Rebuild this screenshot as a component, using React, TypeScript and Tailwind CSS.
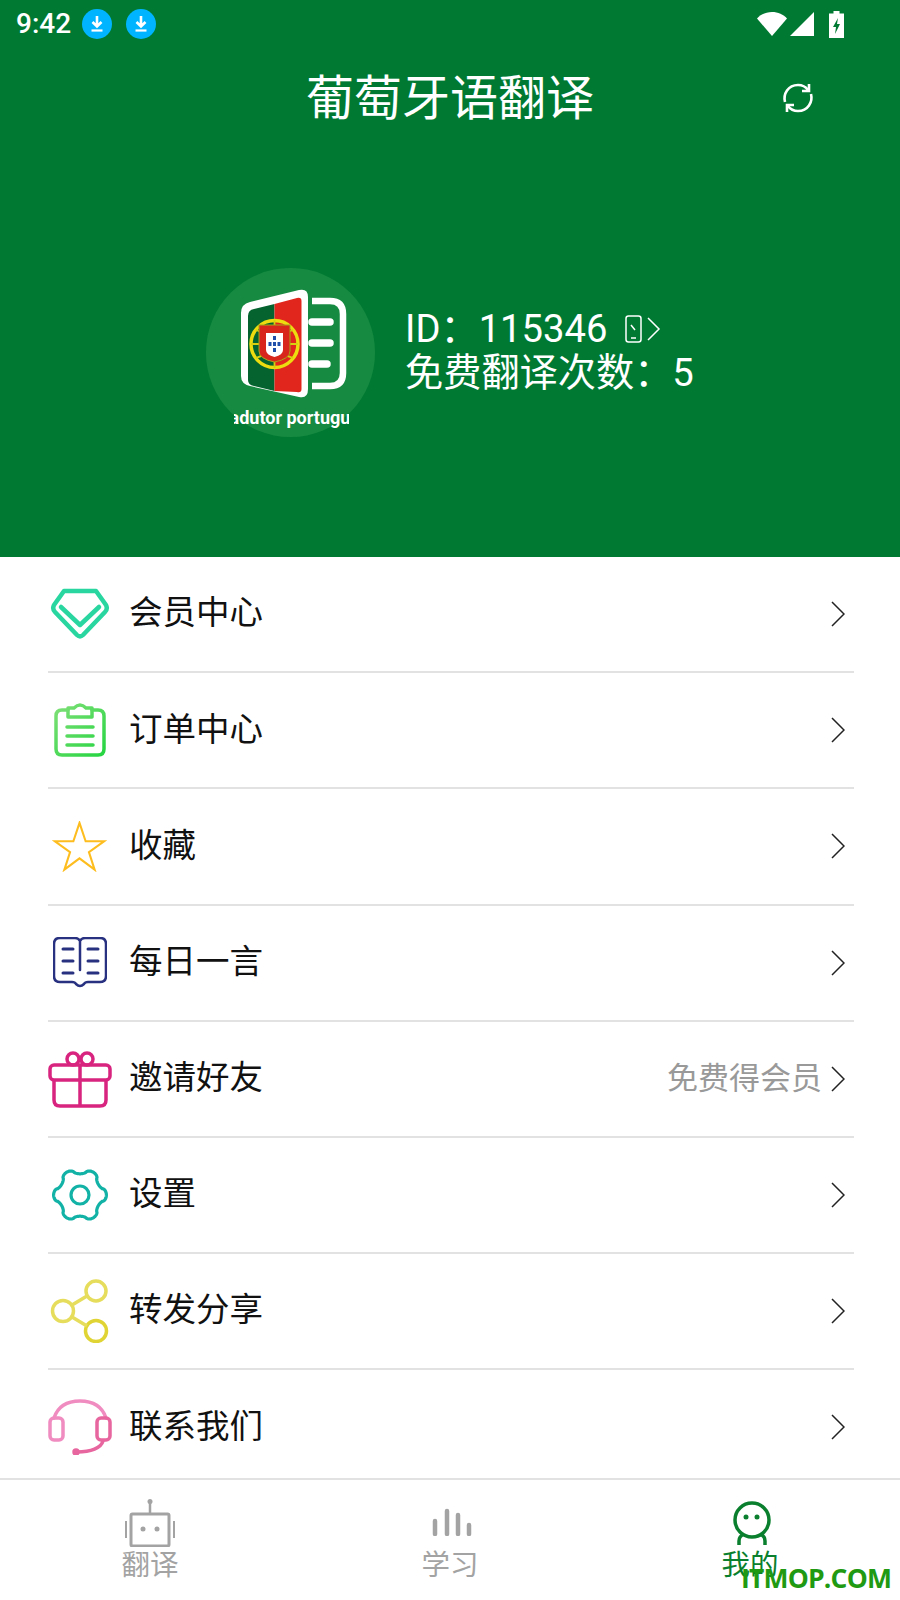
import type { ReactNode } from "react";

const cjk = '"Noto Sans CJK SC", sans-serif';

// outline of the settings gear: six soft teeth with flat tops and shallow valleys
function gearPath(cx: number, cy: number) {
  const pts: string[] = [];
  for (let i = 0; i < 180; i++) {
    const a = (i / 180) * Math.PI * 2;
    const s = Math.cos(6 * a);
    const r = 23.8 + 2.6 * Math.sign(s) * Math.pow(Math.abs(s), 0.6);
    pts.push(`${(cx + r * Math.cos(a)).toFixed(2)} ${(cy + r * Math.sin(a)).toFixed(2)}`);
  }
  return `M${pts.join("L")}Z`;
}

function Download() {
  return (
    <svg width="30" height="30" viewBox="0 0 30 30">
      <circle cx="15" cy="15" r="15" fill="#00b4ff" />
      <path d="M15 7v10M10.500 13l4.500 4.500 4.500-4.500" fill="none" stroke="#fff" strokeWidth="2.600" />
      <path d="M9.500 21.500h11" stroke="#fff" strokeWidth="2.200" />
    </svg>
  );
}

function StatusBar() {
  return (
    <div className="flex h-12 items-center pl-4 pr-14 text-white">
      <span className="text-[28px] font-medium font-['Roboto'] leading-none">9:42</span>
      <div className="ml-[11px] flex gap-3.5">
        <Download />
        <Download />
      </div>
      <div className="ml-auto flex items-center">
        <svg width="30" height="24" viewBox="0 0 30 24">
          <path d="M15 24 0 6.500C3.500 2.500 9 0 15 0s11.500 2.500 15 6.500z" fill="#fff" />
        </svg>
        <svg className="ml-[3px]" width="24" height="24" viewBox="0 0 24 24">
          <path d="M24 0v24H0z" fill="#fff" />
        </svg>
        <svg className="ml-[15px]" width="15" height="27" viewBox="0 0 15 27">
          <path d="M4.500 0h6v2.500H15V27H0V2.500h4.500z" fill="#fff" />
          <path d="M9 7 4 16h3l-1 7 5-10H8z" fill="#007a33" />
        </svg>
      </div>
    </div>
  );
}

function Avatar() {
  return (
    <svg width="169" height="169" viewBox="0 0 169 169" className="shrink-0">
      <defs>
        <clipPath id="round">
          <rect x="28" y="130" width="115" height="39" />
        </clipPath>
      </defs>
      <circle cx="84.500" cy="84.500" r="84.500" fill="#178a41" />
      <path d="M44 34 93 22q9-2 9 7v92q0 10-9 8l-49-11q-9-2-9-10V45q0-9 9-11z" fill="#fff" />
      <path d="M48 41 68.500 36v87L48 118q-6-1-6-6V48q0-6 6-7z" fill="#04632f" />
      <path d="M68.500 36 91 30q4.500-1 4.500 3v88q0 4-4.500 3l-22.500-1z" fill="#e1261d" />
      <circle cx="68.500" cy="76" r="23.500" fill="none" stroke="#ecdc10" strokeWidth="3.500" />
      <path d="M45 76h47M68.500 52v48M50 62q18 8 37 0M50 90q18-8 37 0" stroke="#d8cf10" strokeWidth="1.800" fill="none" />
      <path d="M53 57h31v26q0 8-15.500 11Q53 91 53 83z" fill="#d9261c" stroke="#a8a51a" strokeWidth="1" />
      <path d="M60 65h17v17q0 5-8.500 7Q60 87 60 82z" fill="#fff" />
      <path d="M68.500 68v4M64 74v4M68.500 74v4M73 74v4M68.500 80v4" stroke="#1f4fa8" strokeWidth="3" />
      <path d="M106 33h18q13 0 13 13v59q0 13-13 13h-18" fill="none" stroke="#fff" strokeWidth="6.500" />
      <path d="M106 54h18M106 75h18M106 96h15" stroke="#fff" strokeWidth="7.500" strokeLinecap="round" />
      <g clipPath="url(#round)">
        <text x="85" y="156" textAnchor="middle" fill="#fff" fontSize="18" fontWeight="700" fontFamily="Roboto">
          Tradutor português
        </text>
      </g>
    </svg>
  );
}

function Header() {
  return (
    <header className="h-[557px] shrink-0 bg-[#007a33] text-white">
      <StatusBar />
      <div className="relative mt-[1px] flex h-[96px] items-center justify-center pb-1.5">
        <h1 className="text-[48px] font-normal leading-none">葡萄牙语翻译</h1>
        <svg className="absolute left-[781px] top-[32px]" width="34" height="34" viewBox="0 0 34 34" fill="none" stroke="#fff" strokeWidth="2.600">
          <path d="M4 21C2 13 7 4 17 4c4 0 7.500 1.500 10 5" />
          <path d="M28 3v7h-7" />
          <path d="M30 13c2 8-3 17-13 17-4 0-7.500-1.500-10-5" />
          <path d="M6 31v-7h7" />
        </svg>
      </div>
      <div className="mt-[123px] flex items-center pl-[206px]">
        <Avatar />
        <div className="ml-[30px] pb-[3px] font-['Roboto','Noto_Sans_CJK_SC',sans-serif] text-[38.2px] leading-[44px]">
          <div className="flex items-center">
            <span>ID&#xFF1A;115346</span>
            <svg className="ml-[18px]" width="36" height="30" viewBox="0 0 36 30" fill="none" stroke="#fff" strokeWidth="1.500">
              <rect x="1" y="2" width="15" height="26" rx="2.500" />
              <path d="M6 24h5M6 11l4 5" />
              <path d="M23 4l11 11-11 11" />
            </svg>
          </div>
          <div>免费翻译次数&#xFF1A;5</div>
        </div>
      </div>
    </header>
  );
}

const Diamond = (
  <svg width="60" height="52" viewBox="0 0 60 52" fill="none" stroke="#2ad6a0" strokeWidth="4.500" strokeLinejoin="round" strokeLinecap="round">
    <path d="M14 3h32l10 14q2 4-1 7L33 47q-3 3-6 0L5 24q-3-3-1-7z" />
    <path d="M11 19l19 18 19-18" />
  </svg>
);

const Clipboard = (
  <svg className="mb-[3px]" width="52" height="56" viewBox="0 0 52 56" fill="none" stroke="url(#clip)" strokeWidth="3.500" strokeLinecap="round" strokeLinejoin="round">
    <defs>
      <linearGradient id="clip" gradientUnits="userSpaceOnUse" x1="0" y1="0" x2="52" y2="56">
        <stop offset="0" stopColor="#84e07a" />
        <stop offset="1" stopColor="#22d43f" />
      </linearGradient>
    </defs>
    <path d="M14 9H8q-6 0-6 6v33q0 6 6 6h36q6 0 6-6V15q0-6-6-6h-6" />
    <path d="M14 16V7h6q6-6 12 0h6v9z" />
    <path d="M13 26h26M13 35h26M13 44h26" />
  </svg>
);

const Star = (
  <svg className="mr-[2px]" width="55" height="51" viewBox="0 0 56 54" fill="none" stroke="#fdbd1f" strokeWidth="2.200">
    <path d="M28 2l6.500 19.500H54L38 33l6 18.500-16-12-16 12L18 33 2 21.500h19.500z" />
  </svg>
);

const Book = (
  <svg width="54" height="52" viewBox="0 0 54 52" fill="none" stroke="#27317f" strokeWidth="2.500" strokeLinecap="round">
    <path d="M27 4c-1-2-3-3-5-3H7Q1 1 1 7v32q0 6 6 6h12q3 0 4 2 4 4 8 0 1-2 4-2h12q6 0 6-6V7q0-6-6-6H32c-2 0-4 1-5 3v29" />
    <path d="M10 12h10M35 12h10M10 24h10M35 24h10M10 36h10M35 36h10" strokeWidth="3" />
  </svg>
);

const Gift = (
  <svg width="64" height="58" viewBox="0 0 64 58" fill="none" stroke="#d9247f" strokeWidth="3.500">
    <circle cx="25" cy="9" r="6" />
    <circle cx="39" cy="9" r="6" />
    <rect x="2" y="15" width="60" height="15" rx="4" />
    <path d="M6 30v20q0 6 6 6h40q6 0 6-6V30M32 15v41" />
  </svg>
);

const Gear = (
  <svg width="56" height="56" viewBox="0 0 56 56" fill="none" stroke="#12b2a6" strokeWidth="3.200" strokeLinejoin="round">
    <path d={gearPath(28, 28)} />
    <circle cx="28" cy="28" r="9" />
  </svg>
);

const Share = (
  <svg className="mr-[2px]" width="60" height="64" viewBox="0 0 60 64" fill="none" stroke="#e6dd5c" strokeWidth="3.500">
    <circle cx="47" cy="12" r="10" />
    <circle cx="14" cy="32" r="10.500" />
    <circle cx="47" cy="52" r="10.500" stroke="#dfd433" />
    <path d="M23 26l15-9M23 38l15 9" />
  </svg>
);

const Headset = (
  <svg width="64" height="56" viewBox="0 0 64 56" fill="none" stroke="#f08cc0" strokeWidth="3.500" strokeLinecap="round">
    <path d="M6 19C10 7 20 2 32 2s22 5 26 17" />
    <rect x="2" y="19" width="13" height="22" rx="4" />
    <rect x="49" y="19" width="13" height="22" rx="4" stroke="#e8669f" />
    <path d="M55 42c-2 7-12 11-26 11" stroke="#e8669f" />
    <circle cx="28" cy="53" r="2" fill="#e8669f" stroke="#e8669f" />
  </svg>
);

function Chevron() {
  return (
    <svg width="14" height="26" viewBox="0 0 14 26" fill="none" stroke="#222" strokeWidth="1.500">
      <path d="M1 1l12 12L1 25" />
    </svg>
  );
}

function Row({ icon, label, sub, last }: { icon: ReactNode; label: string; sub?: string; last?: boolean }) {
  return (
    <div className={`flex items-center ${last ? "h-[108px] pt-1.5" : "h-[116.2px] border-b-2 border-[#e2e2e2]"}`}>
      <div className="flex w-16 shrink-0 justify-center">{icon}</div>
      <span className="ml-[17px] pb-2 text-[33.5px] leading-none text-[#111]">{label}</span>
      {sub && <span className="ml-auto pb-1.5 text-[31px] leading-none text-[#999]">{sub}</span>}
      <span className={`${sub ? "ml-[9px]" : "ml-auto"} mr-[9px]`}>
        <Chevron />
      </span>
    </div>
  );
}

const rows = [
  { icon: Diamond, label: "会员中心" },
  { icon: Clipboard, label: "订单中心" },
  { icon: Star, label: "收藏" },
  { icon: Book, label: "每日一言" },
  { icon: Gift, label: "邀请好友", sub: "免费得会员" },
  { icon: Gear, label: "设置" },
  { icon: Share, label: "转发分享" },
  { icon: Headset, label: "联系我们" },
];

function NavItem({ icon, label, active }: { icon: ReactNode; label: string; active?: boolean }) {
  return (
    <div className="flex w-[300px] flex-col items-center">
      <div className="flex h-[49px] items-end">{icon}</div>
      <span className={`-mt-[2px] text-[28.5px] leading-[36px] ${active ? "text-[#0a7f2e]" : "text-[#a3a3a3]"}`}>{label}</span>
    </div>
  );
}

function BottomNav() {
  return (
    <nav className="relative flex h-[123px] shrink-0 justify-between border-t-2 border-[#e2e2e2] pt-[18px]">
      <NavItem
        label="翻译"
        icon={
          <svg width="50" height="48" viewBox="0 0 50 48" fill="none" stroke="#a3a3a3" strokeWidth="2.500">
            <circle cx="25" cy="2.500" r="2.500" fill="#a3a3a3" stroke="none" />
            <path d="M25 4v11" />
            <rect x="6" y="15" width="38" height="32" rx="1.500" strokeWidth="3" />
            <path d="M1 22v17M49 22v17" strokeWidth="2" />
            <circle cx="18" cy="30" r="2.500" fill="#a3a3a3" stroke="none" />
            <circle cx="32" cy="30" r="2.500" fill="#a3a3a3" stroke="none" />
          </svg>
        }
      />
      <NavItem
        label="学习"
        icon={
          <svg className="mb-[11px] ml-[3px]" width="40" height="28" viewBox="0 0 40 28" stroke="#a3a3a3" strokeWidth="4.500" strokeLinecap="round">
            <path d="M3 13v13M15 3v23M26 7v19M37 17v9" />
          </svg>
        }
      />
      <NavItem
        active
        label="我的"
        icon={
          <svg className="mb-[1px] ml-[4px]" width="38" height="45" viewBox="0 0 38 45" fill="none" stroke="#0a7f2e" strokeWidth="3.500">
            <circle cx="19" cy="19" r="17" />
            <circle cx="13" cy="16" r="2.500" fill="#0a7f2e" stroke="none" />
            <circle cx="24" cy="16" r="2.500" fill="#0a7f2e" stroke="none" />
            <path d="M6 44V40q0-5 5-7M32 44V40q0-5-5-7" />
          </svg>
        }
      />
      <span className="absolute left-[741px] top-[85px] font-['Open_Sans'] text-[26.5px] font-bold leading-none tracking-[-0.8px] text-[#1f9a12]">
        ITMOP.COM
      </span>
    </nav>
  );
}

export default function App() {
  return (
    <div className="flex h-[1600px] w-[900px] flex-col overflow-hidden bg-white" style={{ fontFamily: cjk }}>
      <Header />
      <main className="flex-1 pl-12 pr-[46px]">
        {rows.map((r, i) => (
          <Row key={r.label} icon={r.icon} label={r.label} sub={r.sub} last={i === rows.length - 1} />
        ))}
      </main>
      <BottomNav />
    </div>
  );
}
